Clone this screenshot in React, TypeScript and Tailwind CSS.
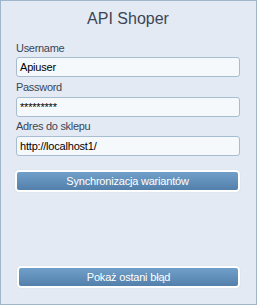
import React from "react";

const font = { fontFamily: '"Liberation Sans", Arial, sans-serif' };

function Label({ children, className = "" }: { children: React.ReactNode; className?: string }) {
  return (
    <div className={`h-[13px] text-[11px] leading-[13px] tracking-[-0.3px] text-[#3a4657] ${className}`}>
      {children}
    </div>
  );
}

function Field({ value, className = "" }: { value: string; className?: string }) {
  return (
    <div
      className={`flex h-[20px] w-[224px] items-center rounded-[3px] border border-[#a7bdd2] bg-[#f5f9fc] pl-[3px] text-[11px] tracking-[-0.2px] text-black ${className}`}
    >
      {value}
    </div>
  );
}

function Btn({ children, className = "" }: { children: React.ReactNode; className?: string }) {
  return (
    <div className={`h-[22px] rounded-[4px] bg-white p-[2px] shadow-[0_0_1px_#b9c8d8] ${className}`}>
      <div className="flex h-full items-center justify-center rounded-[2px] bg-gradient-to-b from-[#70a0ca] to-[#5380aa] text-[11px] tracking-[-0.2px] text-white">
        {children}
      </div>
    </div>
  );
}

export default function App() {
  return (
    <div
      style={font}
      className="flex h-[305px] w-[257px] flex-col border border-[#9fb5cb] bg-[#e3eaf3] pl-[15px] pr-[16px] pt-[9px]"
    >
      <div className="h-[18px] text-center text-[16px] leading-[18px] text-[#3b4556]">API Shoper</div>
      <Label className="mt-[14px]">Username</Label>
      <Field value="Apiuser" className="mt-[2px]" />
      <Label className="mt-[4px]">Password</Label>
      <Field value="*********" className="mt-[3px] text-[9px]" />
      <Label className="mt-[3px]">Adres do sklepu</Label>
      <Field value="http://localhost1/" className="mt-[3px]" />
      <Btn className="ml-[-1px] mt-[14px]">Synchronizacja wariantów</Btn>
      <Btn className="ml-[1px] mt-[74px]">Pokaż ostani błąd</Btn>
    </div>
  );
}
